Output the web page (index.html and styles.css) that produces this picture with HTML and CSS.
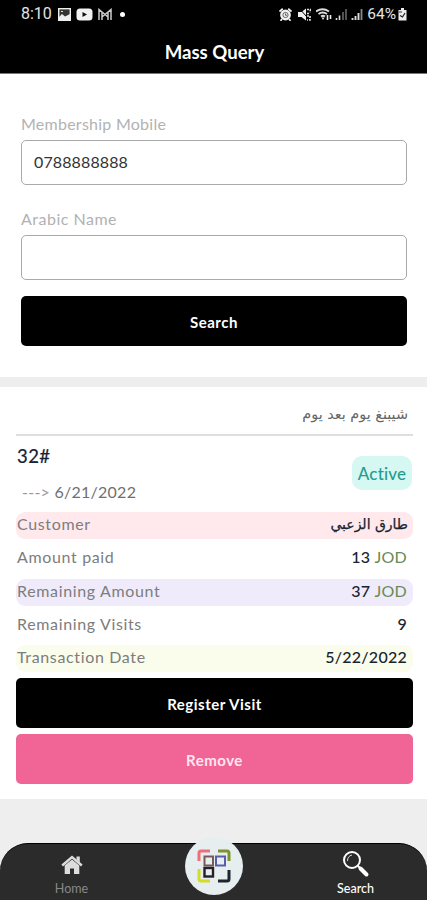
FILE: index.html
```html
<!DOCTYPE html>
<html lang="en">
<head>
<meta charset="utf-8">
<title>Mass Query</title>
<link rel="stylesheet" href="styles.css">
</head>
<body>
<div class="app">
  <header class="header">
    <div class="status">
      <div class="status-left">
        <span class="clock">8:10</span>
        <svg width="13" height="13" viewBox="0 0 13 13"><rect x=".7" y=".7" width="11.6" height="11.6" fill="#333" stroke="#eee" stroke-width="1.4"/><path d="M1 9l3-3 3 2.500 5-2.500v6H1z" fill="#eee"/><path d="M3 3.500h2" stroke="#ddd"/></svg>
        <svg width="17" height="13" viewBox="0 0 17 13"><rect x=".5" y=".5" width="16" height="12" rx="3.5" fill="#f2f2f2"/><path d="M6.500 4v5l4.500-2.500z" fill="#111"/></svg>
        <svg width="14" height="13" viewBox="0 0 14 13"><path d="M1 12V1.500l6 5 6-5V12M4 12V4.500M10 12V4.500M4 9l3-2.500 3 2.500" fill="none" stroke="#ccc" stroke-width="1.500"/></svg>
        <span class="dot"></span>
      </div>
      <div class="status-right">
        <svg class="alarm" width="13" height="13" viewBox="0 0 13 13"><circle cx="6.500" cy="7" r="5.400" fill="#f0f0f0"/><path d="M.5 3.500L3.800.8M12.500 3.500L9.200.8M3 11l-1.500 1.800M10 11l1.500 1.800" stroke="#f0f0f0" stroke-width="1.800"/><circle cx="6.500" cy="7" r="2.600" fill="none" stroke="#444" stroke-width=".8"/><path d="M6.500 5.500v1.800H8" fill="none" stroke="#444" stroke-width=".8"/></svg>
        <svg class="mute" width="13" height="13" viewBox="0 0 13 13"><path d="M0 4h3.500L8 .5v12L3.500 9H0z" fill="#eee"/><path d="M1 0l11 12.500" stroke="#000" stroke-width="1"/><path d="M9 1.500h3.300v3M9 5.500h3M9 8h3v4H9" stroke="#ddd" stroke-width="1.700" stroke-dasharray="2 1" fill="none"/></svg>
        <svg width="47" height="13" viewBox="0 0 47 13"><path d="M0 3.500Q6.500 -1 13 3.500M2.500 6Q6.500 3 11 6M5 8.500Q7 7 9 8.500" fill="none" stroke="#ddd" stroke-width="1.900"/><path d="M7 12l-1.500-2.500h3z" fill="#ddd"/><path d="M11.500 7v5M14.500 7v4" stroke="#eee" stroke-width="1.600"/><path d="M20.500 12v-2M23.500 12V7.500" stroke="#ddd" stroke-width="1.600"/><path d="M27 12V4M30 12V1" stroke="#666" stroke-width="1.600"/><path d="M36.500 12v-2M39.500 12V8M42.500 12V5" stroke="#ddd" stroke-width="1.900"/><path d="M45.500 12V1" stroke="#888" stroke-width="1.800"/></svg>
        <span class="percent">64%</span>
        <svg width="9" height="13" viewBox="0 0 9 13"><path d="M3 0h3v2h2.500v10.500h-8V2H3z" fill="#eee"/><path d="M2 7.500L4.500 9 7 5" fill="none" stroke="#222" stroke-width="1.200"/><path d="M1 4h3" stroke="#333"/></svg>
      </div>
    </div>
    <h1 class="title">Mass Query</h1>
  </header>

  <form class="form">
    <label class="label mobile-label">Membership Mobile</label>
    <div class="field">0788888888</div>
    <label class="label name-label">Arabic Name</label>
    <div class="field"></div>
    <div class="button search-button"><span>Search</span></div>
  </form>

  <main class="card">
    <div class="plan" dir="rtl" lang="ar">شيبنغ يوم بعد يوم</div>
    <div class="summary">
      <div>
        <div class="number">32#</div>
        <div class="expiry"><span class="arrow">---&gt;</span> <span>6/21/2022</span></div>
      </div>
      <div class="badge">Active</div>
    </div>
    <div class="rows">
      <div class="row pink"><span>Customer</span><b class="arabic" dir="rtl" lang="ar">طارق الزعبي</b></div>
      <div class="row"><span>Amount paid</span><b>13 <i>JOD</i></b></div>
      <div class="row purple"><span>Remaining Amount</span><b>37 <i>JOD</i></b></div>
      <div class="row"><span>Remaining Visits</span><b>9</b></div>
      <div class="row yellow"><span>Transaction Date</span><b class="date">5/22/2022</b></div>
    </div>
    <div class="button register"><span>Register Visit</span></div>
    <div class="button remove"><span>Remove</span></div>
  </main>

  <nav class="nav">
    <div class="tab">
      <svg width="22" height="20" viewBox="0 0 22 20"><path d="M11 4.500l7.300 6V19H13v-5.500H9V19H3.700v-8.500z" fill="#ddd"/><path d="M1.200 10.500L11 2l9.800 8.500" fill="none" stroke="#ddd" stroke-width="2.400"/><path d="M15.500 1.500h3.300v6l-3.300-2.800z" fill="#ddd"/></svg>
      <span>Home</span>
    </div>
    <div class="scan">
      <svg width="34" height="34" viewBox="0 0 34 34" fill="none"><path d="M2 12V4q0-2 2-2h9" stroke="#ef6e79" stroke-width="3"/><path d="M21 2h9q2 0 2 2v8" stroke="#7e922f" stroke-width="3"/><path d="M2 20v10q0 2 2 2h9" stroke="#d3dc27" stroke-width="3"/><path d="M32 21v9q0 2-2 2h-9" stroke="#20242d" stroke-width="3"/><rect x="7.500" y="7.500" width="8.500" height="9" stroke="#79595b" stroke-width="2"/><rect x="19" y="7.500" width="9" height="9" stroke="#5a5dab" stroke-width="2"/><rect x="7.500" y="19" width="8.500" height="8.500" stroke="#25202a" stroke-width="2.400"/></svg>
    </div>
    <div class="tab active">
      <svg width="28" height="28" viewBox="0 0 28 28" fill="none"><circle cx="10" cy="10" r="8" stroke="#fff" stroke-width="2"/><path d="M5.500 11q0-5 4.500-6" stroke="#ddd"/><path d="M15.500 15.500l3 3" stroke="#fff" stroke-width="2"/><path d="M18.500 18.500l6 6" stroke="#fff" stroke-width="4" stroke-linecap="round"/></svg>
      <span>Search</span>
    </div>
  </nav>
</div>
</body>
</html>
```
FILE: styles.css
```css
* { box-sizing: border-box; }
body {
  margin: 0;
  background: #eee;
  font-family: Lato, "Noto Sans", sans-serif;
}
.app {
  width: 427px;
  height: 900px;
  display: flex;
  flex-direction: column;
  overflow: hidden;
}
.header {
  height: 74px;
  flex: none;
  background: #000;
  color: #fff;
  border-bottom: 1px solid #777;
}
.status {
  height: 28px;
  padding: 0 20px 0 21px;
  display: flex;
  align-items: center;
  justify-content: space-between;
  font: 16px/28px Roboto, sans-serif;
  color: #e4e4e4;
}
.status-left, .status-right { display: flex; align-items: center; }
.status-left { gap: 5px; }
.clock { width: 32px; }
.dot {
  width: 5px;
  height: 5px;
  margin-left: 3px;
  border-radius: 50%;
  background: #fff;
}
.alarm { margin-right: 6px; }
.mute { margin-right: 5px; }
.percent { margin: 0 2px 0 4px; font-size: 15.500px; }
.title {
  margin: 10px 0 0;
  padding-left: 2px;
  font-size: 18.600px;
  line-height: 28px;
  font-weight: 700;
  text-align: center;
}
.form {
  height: 303px;
  flex: none;
  padding: 40px 20px 0 21px;
  background: #fff;
}
.label {
  display: block;
  height: 26px;
  line-height: 19px;
  font-size: 16px;
  letter-spacing: .25px;
  color: #b2b2b2;
}
.name-label {
  margin-top: 24px;
  letter-spacing: .5px;
}
.field {
  height: 45px;
  padding-left: 12px;
  border: 1px solid #aaa;
  border-radius: 5px;
  font: 16px/41px Lato, sans-serif;
  letter-spacing: .12px;
  color: #333;
}
.button {
  height: 50px;
  display: flex;
  align-items: center;
  justify-content: center;
  padding-top: 1px;
  border-radius: 5px;
  background: #000;
  color: #fff;
  font-size: 15px;
  font-weight: 700;
  letter-spacing: .5px;
}
.search-button { margin-top: 16px; }
.card {
  height: 412px;
  flex: none;
  margin-top: 10px;
  padding: 0 14px 0 16px;
  background: #fff;
}
.plan {
  height: 49px;
  padding: 10px 5px 0 0;
  border-bottom: 2px solid #dedfe1;
  font: 14.400px/34px "DejaVu Sans", sans-serif;
  color: #666;
}
.summary {
  height: 76px;
  display: flex;
  justify-content: space-between;
}
.number {
  height: 40px;
  padding: 7px 0 0 1px;
  font-size: 18.500px;
  line-height: 26px;
  letter-spacing: .4px;
  color: #142033;
  -webkit-text-stroke: .2px #142033;
}
.expiry {
  padding-left: 6px;
  font-size: 16px;
  line-height: 31px;
  letter-spacing: .25px;
  color: #707070;
}
.arrow { color: #999; }
.badge {
  width: 60px;
  height: 34px;
  margin: 20px 1px 0 0;
  border-radius: 10px;
  background: #d6f8f2;
  color: #269b91;
  font: 500 17px/36px Lato, sans-serif;
  font-variant-ligatures: none;
  letter-spacing: .15px;
  text-align: center;
}
.rows { display: grid; gap: 6.300px; }
.row {
  height: 27px;
  padding: 0 5px 0 1px;
  display: flex;
  justify-content: space-between;
  border-radius: 9px;
  font-size: 16px;
  line-height: 24px;
  letter-spacing: .65px;
  color: #7d7d7d;
}
.row b { margin-right: 1px; font-weight: 500; letter-spacing: .25px; color: #172331; }
.row i { font-style: normal; font-weight: 400; color: #668b57; }
.row .arabic {
  margin-right: 0;
  font-family: "DejaVu Sans", sans-serif;
  font-size: 14px;
  letter-spacing: 0;
  -webkit-text-stroke: .25px currentColor;
}
.pink { background: #ffe9ed; }
.purple { background: #efebfb; }
.yellow { background: #fafcec; }
.register { margin-top: 6px; }
.remove { margin-top: 6px; background: #f06596; color: #ffe7ef; }
.nav {
  height: 57px;
  flex: none;
  margin-top: 44px;
  padding: 0 1px;
  display: grid;
  grid-template-columns: 141px 1fr 141px;
  border-radius: 28px 28px 0 0;
  background: #2b2b2b;
  border-top: 1px solid #000;
}
.tab {
  height: 57px;
  padding-top: 11px;
  display: flex;
  flex-direction: column;
  align-items: center;
  font-size: 12.500px;
  line-height: 17px;
  color: #888;
}
.tab span { margin-top: 5px; }
.active { padding-top: 6px; color: #fff; font-weight: 500; }
.active span { margin-top: 2px; }
.scan {
  width: 58px;
  height: 58px;
  margin: -7px auto 0;
  display: grid;
  place-items: center;
  border-radius: 50%;
  background: #e6eeef;
}
```
